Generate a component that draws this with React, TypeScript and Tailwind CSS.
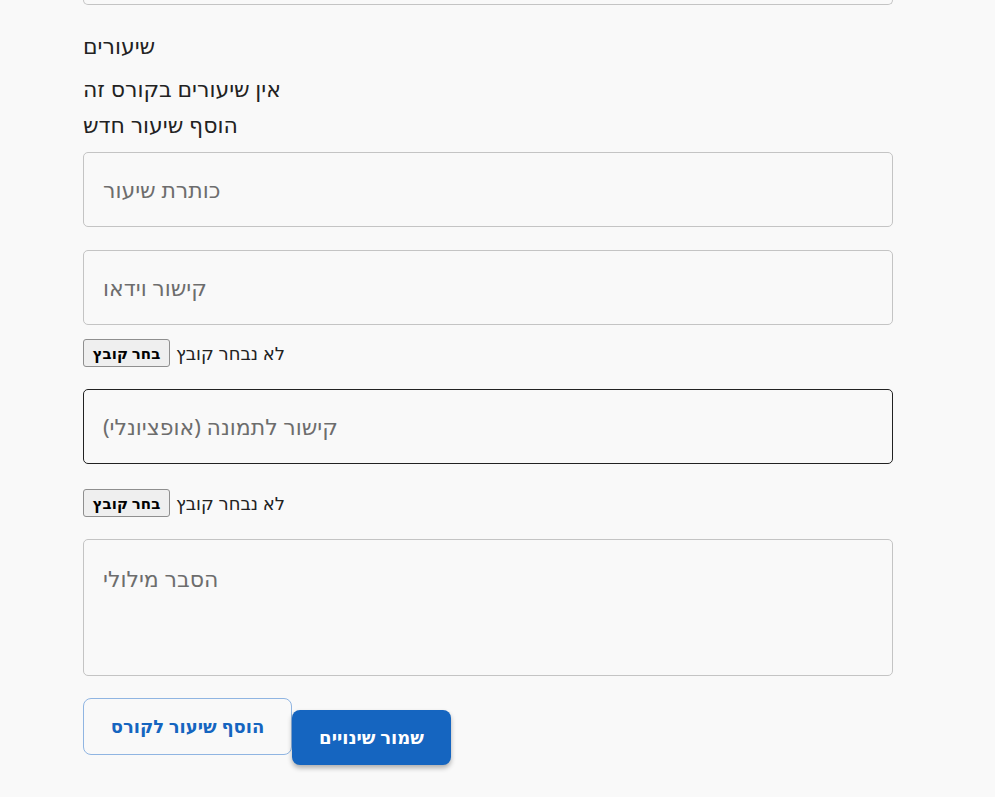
export default function App() {
    return (
        <div
            className="min-h-[797px] bg-[#f9f9f9] text-[#222]"
            style={{ fontFamily: '"Noto Sans", "DejaVu Sans", sans-serif' }}
        >
            <div className="ml-[83px] w-[810px] flex flex-col">
                {/* previous field, scrolled off */}
                <div className="h-[5px] rounded-b-[5px] border-x border-b border-[#c4c4c4]" />

                <h3 className="mt-[28px] text-[22px] leading-[24px]">שיעורים</h3>
                <p className="mt-[19px] text-[22px] leading-[24px]">אין שיעורים בקורס זה</p>
                <p className="mt-[12px] text-[22px] leading-[24px]">הוסף שיעור חדש</p>

                <Field placeholder="כותרת שיעור" className="mt-[16px]" />
                <Field placeholder="קישור וידאו" className="mt-[23px]" />
                <FilePick className="mt-[14px]" />
                <Field placeholder="קישור לתמונה (אופציונלי)" className="mt-[22px]" focused />
                <FilePick className="mt-[25px]" />

                <div className="mt-[22px] h-[137px] rounded-[5px] border border-[#c4c4c4] px-[19px] pt-[24px] text-[22px] leading-[28px] text-[#6d6d6d]">
                    הסבר מילולי
                </div>

                <div className="mt-[22px] flex items-start">
                    <button className="h-[57px] w-[209px] rounded-[8px] border border-[#90b5e2] text-[18px] font-semibold text-[#1565c0]">
                        הוסף שיעור לקורס
                    </button>
                    <button className="mt-[12px] h-[55px] w-[159px] rounded-[8px] bg-[#1565c0] text-[18px] font-semibold text-white shadow-[0_3px_5px_rgba(0,0,0,0.3)]">
                        שמור שינויים
                    </button>
                </div>
            </div>
        </div>
    );
}

function Field({
    placeholder,
    className,
    focused,
}: {
    placeholder: string;
    className?: string;
    focused?: boolean;
}) {
    return (
        <div
            className={`${className} flex h-[75px] items-center rounded-[5px] border px-[19px] text-[22px] text-[#6d6d6d] ${
                focused ? "border-[#222]" : "border-[#c4c4c4]"
            }`}
        >
            {placeholder}
        </div>
    );
}

function FilePick({ className }: { className?: string }) {
    return (
        <div className={`${className} flex h-[28px] items-center gap-[6px]`}>
            <span className="flex h-[28px] w-[87px] items-center justify-center rounded-[3px] border border-[#8f8f8f] bg-[#efefef] text-[15px] font-semibold text-black">
                בחר קובץ
            </span>
            <span className="text-[18px] text-[#222]">לא נבחר קובץ</span>
        </div>
    );
}
